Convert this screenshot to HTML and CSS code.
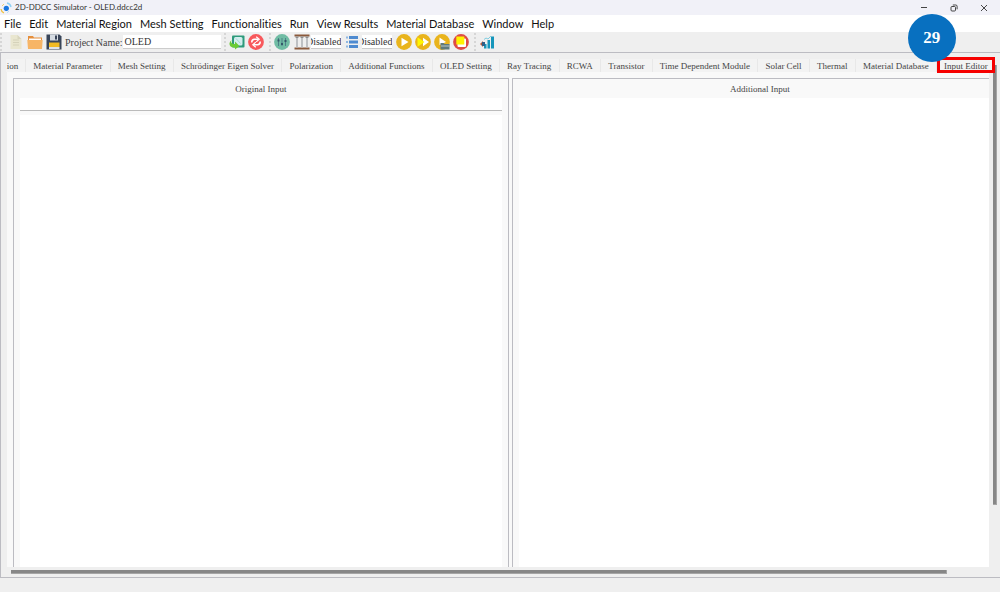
FILE: index.html
```
<!DOCTYPE html>
<html lang="en">
<head>
<meta charset="utf-8">
<title>2D-DDCC Simulator - OLED.ddcc2d</title>
<link rel="stylesheet" href="styles.css">
</head>
<body>
<div class="app">
  <header class="titlebar">
    <svg class="app-icon" viewBox="0 0 12 12"><path d="M1 7a5 5 0 0 0 3 4" stroke="#f0c040" stroke-width="1.3" fill="none"/><path d="M7 1a5 5 0 0 1 4 4" stroke="#8fd0f4" stroke-width="1.4" fill="none"/><path d="M2 4L4 2" stroke="#f2cf70"/><path d="M9 9L7 11" stroke="#b9dff5"/><circle cx="6.300" cy="6.300" r="2.600" fill="#1976e0"/></svg>
    <h1 class="title">2D-DDCC Simulator - OLED.ddcc2d</h1>
    <div class="window-controls">
      <button class="window-button" aria-label="Minimize"><svg viewBox="0 0 8 8"><path d="M1 3.500h6" stroke="#444"/></svg></button>
      <button class="window-button" aria-label="Restore"><svg viewBox="0 0 8 8" fill="none" stroke="#333" stroke-width=".9"><rect x="1" y="2.500" width="4.500" height="4.500" rx="1"/><path d="M2.800 1h3a1.300 1.300 0 0 1 1.300 1.300v3"/></svg></button>
      <button class="window-button" aria-label="Close"><svg viewBox="0 0 8 8"><path d="M1 1l6 6M7 1L1 7" stroke="#333" stroke-width=".9"/></svg></button>
    </div>
  </header>

  <nav class="menubar">
    <button class="menu">File</button>
    <button class="menu">Edit</button>
    <button class="menu">Material Region</button>
    <button class="menu">Mesh Setting</button>
    <button class="menu">Functionalities</button>
    <button class="menu">Run</button>
    <button class="menu">View Results</button>
    <button class="menu">Material Database</button>
    <button class="menu">Window</button>
    <button class="menu">Help</button>
  </nav>

  <div class="toolbar">
    <div class="tool-group files">
      <button class="tool" aria-label="New"><svg viewBox="0 0 16 16"><path d="M2.500 1h7l4 4v10h-11z" fill="#e9e6cf"/><path d="M9.500 1v4h4" fill="#d8d5bd"/><path d="M5 6h6M5 8.500h6M5 11h6" stroke="#d5d2ba"/></svg></button>
      <button class="tool" aria-label="Open"><svg viewBox="0 0 16 16"><path d="M1 14V2h5l1 1.500h8V14z" fill="#e58f3c"/><path d="M2 4.500h12v3H2z" fill="#fff"/><path d="M.300 6h15.400l-.7 9H1z" fill="#f7b566"/></svg></button>
      <button class="tool" aria-label="Save"><svg viewBox="0 0 16 16"><path d="M.500.500h13l2 2v13H.500z" fill="#394559"/><path d="M4 .5h8v6H4z" fill="#d5dbe2"/><path d="M9 1.500h2v4H9z" fill="#394559"/><path d="M3 8.500h10.500v5H3z" fill="#f2bb24"/><path d="M3 13h10.500v2H3z" fill="#dfe3e8"/></svg></button>
      <div class="pair">
        <label class="label" for="project">Project Name:</label>
        <input class="field project" id="project" value="OLED">
      </div>
    </div>
    <div class="tool-group">
      <button class="tool" aria-label="Import"><svg viewBox="0 0 16 16"><rect x="3" y="1.500" width="12.500" height="12" rx="1" fill="#2f9b7c"/><rect x="5" y="3" width="8.500" height="8.500" rx="1.500" fill="#d3eeee"/><path d="M7 4.500l4.500 5" stroke="#a5d5d3"/><path d="M2.500 6q-1.500 4 3.500 4V7.500l4.500 4.500L6 15.500V13.500C0 14-1 9.500 2.500 6z" fill="#6bcb35"/></svg></button>
      <button class="tool" aria-label="Refresh"><svg viewBox="0 0 16 16"><circle cx="8" cy="8" r="7.900" fill="#f8595c"/><path d="M3.800 8.500A3 3 0 0 1 6.500 5.300h3.500M12.200 7.500a3 3 0 0 1-2.700 3.200H6" stroke="#fff" stroke-width="1.500" fill="none"/><path d="M8.200 2.700l3 2.600-3 2.600M7.800 8.100l-3 2.600 3 2.600" fill="none" stroke="#fff" stroke-width="1.200"/></svg></button>
    </div>
    <div class="tool-group modes">
      <button class="tool" aria-label="Settings"><svg viewBox="0 0 16 16"><circle cx="8" cy="8" r="7.900" fill="#70bca4"/><path d="M4.500 4v8M8 4v8M11.500 4v8" stroke="#4d8087" stroke-width="1"/><path d="M3.500 6.500h2M7 10h2M10.500 7h2" stroke="#35586a" stroke-width="2"/></svg></button>
      <div class="pair">
        <button class="tool" aria-label="Structure"><svg viewBox="0 0 16 16"><path d="M.500.500h15v2H.500zM.500 13.500h15v2H.500z" fill="#8b5a3c"/><path d="M3 2.500v11M8 2.500v11M13 2.500v11" stroke="#b9bbbe" stroke-width="1.800"/><path d="M1.500 3.200h3M6.500 3.200h3M11.500 3.200h3" stroke="#777"/></svg></button>
        <input class="field mode" aria-label="Structure mode" value="Disabled">
      </div>
      <div class="pair">
        <button class="tool" aria-label="List"><svg viewBox="0 0 16 16"><path d="M4 3.500h9M4 8h9M4 12.500h9" stroke="#4f8bd0" stroke-width="3"/><path d="M1 3.500h2M1 8h2M1 12.500h2" stroke="#90b7e2" stroke-width="2"/></svg></button>
        <input class="field mode" aria-label="List mode" value="Disabled">
      </div>
      <div class="runs">
        <button class="tool" aria-label="Run"><svg viewBox="0 0 16 16"><circle cx="8" cy="8" r="7.900" fill="#e9b41c"/><path d="M5.500 3.700l7 4.300-7 4.300z" fill="#fff"/></svg></button>
        <button class="tool" aria-label="Run all"><svg viewBox="0 0 16 16"><circle cx="8" cy="8" r="7.900" fill="#e9b41c"/><path d="M8 3.700l6 4.300-6 4.300z" fill="#fff"/><path d="M2.500 3.200L9.500 8l-7 4.800z" fill="#fff700"/></svg></button>
        <button class="tool" aria-label="Run from file"><svg viewBox="0 0 16 16"><circle cx="8" cy="8" r="7.900" fill="#e9b41c"/><path d="M5.500 3.500l6.500 4.500-6.500 3z" fill="#fff"/><path d="M6.500 9h3l1 1h5v5.500h-9z" fill="#607a7c"/><path d="M7 12h8" stroke="#b9c8c8"/></svg></button>
        <button class="tool" aria-label="Stop"><svg viewBox="0 0 16 16"><circle cx="8" cy="8" r="7.900" fill="#df4b45"/><rect x="4.500" y="4.500" width="8.500" height="8.500" rx="1" fill="#fff"/><rect x="3.300" y="2.500" width="8" height="8" fill="#fff200"/></svg></button>
      </div>
    </div>
    <div class="tool-group">
      <button class="tool" aria-label="Charts"><svg viewBox="0 0 16 16"><path d="M5 10h2.500v4.500H5zM8.500 6h2.500v8.500H8.500zM12 2.500h3v12h-3z" fill="#1696bb"/><path d="M5 5.500l2-1.500 2 1 3-3" stroke="#7fcde0" fill="none"/><path d="M4 7v6L1 10z" fill="#b55b3e"/><path d="M3 8h3v4H3z" fill="#315f87"/></svg></button>
    </div>
  </div>

  <main class="workspace">
    <div class="content">
      <div class="tabs" role="tablist">
        <button class="tab clipped" role="tab">ion</button>
        <button class="tab" role="tab">Material Parameter</button>
        <button class="tab" role="tab">Mesh Setting</button>
        <button class="tab" role="tab">Schrödinger Eigen Solver</button>
        <button class="tab" role="tab">Polarization</button>
        <button class="tab" role="tab">Additional Functions</button>
        <button class="tab" role="tab">OLED Setting</button>
        <button class="tab" role="tab">Ray Tracing</button>
        <button class="tab" role="tab">RCWA</button>
        <button class="tab" role="tab">Transistor</button>
        <button class="tab" role="tab">Time Dependent Module</button>
        <button class="tab" role="tab">Solar Cell</button>
        <button class="tab" role="tab">Thermal</button>
        <button class="tab" role="tab">Material Database</button>
        <button class="tab current" role="tab" aria-selected="true">Input Editor<span class="highlight"><span class="step">29</span></span></button>
      </div>
      <div class="page" role="tabpanel">
        <section class="panel">
          <label class="heading" for="original">Original Input</label>
          <input class="path" aria-label="Original input file">
          <textarea class="editor" id="original"></textarea>
        </section>
        <section class="panel open">
          <label class="heading" for="additional">Additional Input</label>
          <textarea class="editor" id="additional"></textarea>
        </section>
      </div>
    </div>
    <div class="track vertical"><div class="thumb"></div></div>
    <div class="track horizontal"><div class="thumb"></div></div>
  </main>
  <footer class="statusbar"></footer>
</div>
</body>
</html>
```
FILE: styles.css
```
* { box-sizing: border-box; }

body {
  margin: 0;
  background: #efefef;
  color: #333;
  font-family: "Liberation Serif", serif;
}

button, input, textarea {
  margin: 0;
  padding: 0;
  border: 0;
  border-radius: 0;
  background: none;
  color: inherit;
  font: inherit;
  outline: 0;
}

svg { display: block; width: 100%; height: 100%; }

.app { display: flex; flex-direction: column; min-height: 100vh; }

.titlebar {
  display: flex;
  align-items: center;
  height: 15px;
  background: #f1f1f8;
}
.app-icon { width: 12px; height: 12px; margin-right: 3px; }
.title {
  margin: 0;
  font: 8px/15px Lato, sans-serif;
}
.window-controls { display: flex; gap: 22px; margin-left: auto; padding-right: 12px; }
.window-button { width: 8px; height: 8px; }

.menubar {
  display: flex;
  gap: 8px;
  height: 17px;
  padding-left: 4px;
  background: #fff;
}
.menu {
  font: 11px/16px Lato, sans-serif;
  font-variant-ligatures: none;
  color: #111;
  white-space: nowrap;
}

.toolbar {
  display: flex;
  align-items: center;
  height: 20px;
  background: #efefef;
}
.tool-group {
  display: flex;
  align-items: center;
  gap: 3px;
  height: 18px;
  padding: 0 4px 0 3px;
  border-left: 2px dotted #d6d6d6;
}
.tool-group + .tool-group { margin-left: 1px; }
.tool-group.files { padding: 0 2px 0 6px; }
.tool-group.modes { gap: 4px; }
.pair { display: flex; align-items: center; gap: 1px; }
.runs { display: flex; gap: 3px; }
.tool { flex: none; width: 16px; height: 16px; }
.label { font-size: 10px; color: #444; white-space: nowrap; }
.field { height: 14px; background: #fff; border-bottom: 1px solid #ccc; font-size: 10px; }
.project { width: 98px; padding-left: 1px; }
.mode { width: 30px; direction: rtl; }

.workspace {
  flex: 1;
  display: grid;
  grid-template: minmax(0, 1fr) 10px / minmax(0, 1fr) 11px;
  border: solid #bcbcc2;
  border-width: 1px 0 1px 1px;
}
.content {
  display: flex;
  flex-direction: column;
  padding: 6px 0 0 5px;
}

.tabs { display: flex; height: 13px; margin-right: -6px; }
.tab {
  flex: 1 0 auto;
  border-left: 1px solid #e8e8e8;
  background: #f3f3f3;
  color: #444;
  font-size: 9px;
  line-height: 14px;
  text-align: center;
  white-space: nowrap;
}
.tab.clipped { flex: none; width: 19px; padding-right: 6px; border: 0; }
.tab.current { position: relative; }
.highlight {
  position: absolute;
  inset: -2px 0 -1px 0;
  border: 3px solid #f60000;
}
.step {
  position: absolute;
  left: -32px;
  bottom: 8px;
  width: 48px;
  height: 48px;
  border-radius: 50%;
  background: #0870c0;
  color: #fff;
  font-size: 17px;
  font-weight: bold;
  line-height: 48px;
}

.page {
  flex: 1;
  display: grid;
  grid-template-columns: 497fr 478fr;
  gap: 3px;
  margin-left: 1px;
  padding: 6px 0 0 6px;
  background: #f9f9f9;
}
.panel {
  display: flex;
  flex-direction: column;
  padding: 0 6px;
  border: 1px solid #bcbcc2;
  border-bottom: 0;
}
.panel.open { padding-right: 0; border-right: 0; }
.panel.open .heading { padding-left: 12px; }
.heading {
  height: 19px;
  color: #444;
  font-size: 9px;
  line-height: 21px;
  text-align: center;
}
.path {
  width: 100%;
  height: 13px;
  margin-bottom: 4px;
  border-bottom: 1px solid #bbb;
  background: #fff;
  font-size: 10px;
}
.editor {
  flex: 1;
  width: 100%;
  background: #fff;
  font-size: 10px;
  resize: none;
}

.track { display: flex; }
.vertical { padding: 12px 3px 0 4px; }
.horizontal { grid-column: 1 / -1; padding: 3px 0 0 10px; }
.thumb { background: #878787; border: 1px solid #a5a5a5; border-width: 0 1px 1px 0; }
.vertical .thumb { width: 4px; height: calc(88% - 2px); }
.horizontal .thumb { width: calc(95% - 4px); height: 4px; }

.statusbar { height: 14px; background: #efefef; }
```
